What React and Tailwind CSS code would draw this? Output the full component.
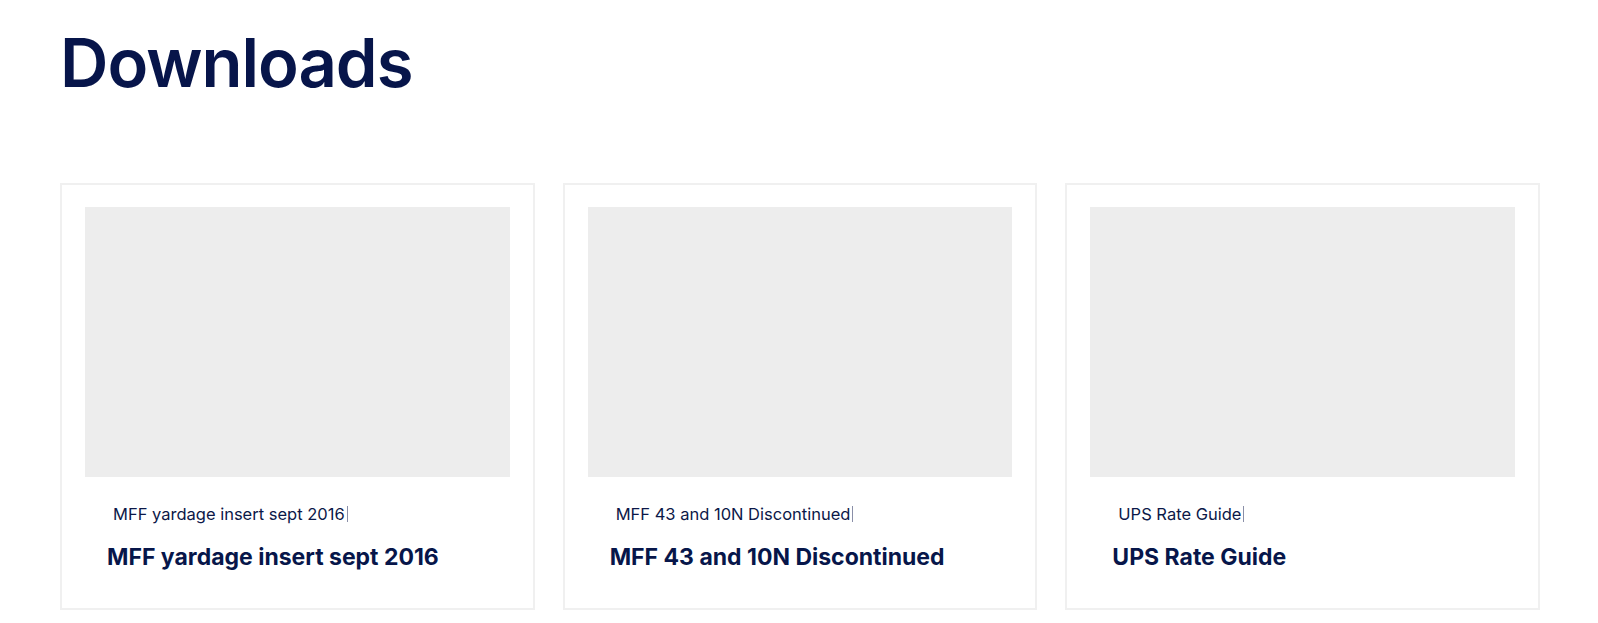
const DOWNLOADS = [
  { id: 1, file: "MFF yardage insert sept 2016", title: "MFF yardage insert sept 2016" },
  { id: 2, file: "MFF 43 and 10N Discontinued", title: "MFF 43 and 10N Discontinued" },
  { id: 3, file: "UPS Rate Guide", title: "UPS Rate Guide" },
];

function DownloadCard({ item }) {
  return (
    <div className="flex h-[427px] flex-col border-2 border-[#f0f0f0] bg-white px-[23px] pt-[22px]">
      <div className="h-[270px] w-full bg-[#ededed]" />
      <div className="px-[28px] pt-[24px]">
        <p className="text-[16.5px] leading-[26px] text-[#0c1848]">
          {item.file}
          <span className="ml-[2px] inline-block h-[16px] w-px translate-y-[2px] bg-[#8a8fa8]" />
        </p>
      </div>
      <h3 className="px-[22px] pt-[14px] text-[23px] font-bold leading-[32px] text-[#07164a]">
        {item.title}
      </h3>
    </div>
  );
}

export default function App() {
  return (
    <div className="min-h-screen bg-white pl-[60px] pr-[58px] pt-[23px] font-['Inter',sans-serif]">
      <h1 className="text-[67px] font-semibold leading-[80px] tracking-[-1px] text-[#07154a]">
        Downloads
      </h1>
      <div className="mt-[80px] grid grid-cols-3 gap-[28px]">
        {DOWNLOADS.map((d) => (
          <DownloadCard key={d.id} item={d} />
        ))}
      </div>
    </div>
  );
}
